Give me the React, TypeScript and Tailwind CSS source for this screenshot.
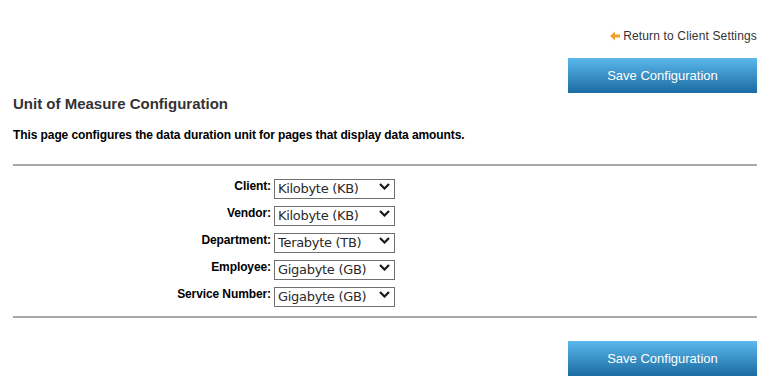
import React from "react";

const rows = [
  { label: "Client:", value: "Kilobyte (KB)" },
  { label: "Vendor:", value: "Kilobyte (KB)" },
  { label: "Department:", value: "Terabyte (TB)" },
  { label: "Employee:", value: "Gigabyte (GB)" },
  { label: "Service Number:", value: "Gigabyte (GB)" },
];

const options = ["Byte (B)", "Kilobyte (KB)", "Megabyte (MB)", "Gigabyte (GB)", "Terabyte (TB)"];

function SaveButton() {
  return (
    <button
      type="button"
      className="w-[189px] h-[35px] bg-gradient-to-b from-[#5ab8ec] to-[#1a6ca2] text-white text-[13px] font-['Liberation_Sans',Arial,sans-serif]"
    >
      Save Configuration
    </button>
  );
}

function Select({ value }: { value: string }) {
  return (
    <div className="relative w-[121px] h-[20px]">
      <select
        defaultValue={value}
        className="appearance-none w-full h-full border border-[#707070] bg-white pl-[3px] py-0 text-[13px] leading-[18px] text-[#2a2a2a] font-['DejaVu_Sans',Tahoma,sans-serif] tracking-[-0.3px] outline-none rounded-none"
      >
        {options.map((o) => (
          <option key={o}>{o}</option>
        ))}
      </select>
      <svg
        className="absolute right-[5px] top-[7px] pointer-events-none"
        width="11"
        height="7"
        viewBox="0 0 11 7"
      >
        <path d="M1 1 L5.5 5.5 L10 1" fill="none" stroke="#1a1a1a" strokeWidth="2.2" />
      </svg>
    </div>
  );
}

export default function App() {
  return (
    <div className="w-[762px] h-[391px] bg-white pl-[13px] pr-[5px] font-['Liberation_Sans',Arial,sans-serif] text-[#333]">
      <div className="flex justify-end pt-[29px]">
        <a className="flex items-center gap-[3px] text-[12px] tracking-[0.15px] text-[#333] leading-[14px]" href="#">
          <svg width="10" height="10" viewBox="0 0 10 10">
            <path d="M0 5 L5 0.5 L5 3.5 L10 3.5 L10 6.5 L5 6.5 L5 9.5 Z" fill="#f0a030" />
          </svg>
          Return to Client Settings
        </a>
      </div>
      <div className="flex justify-end mt-[15px]">
        <SaveButton />
      </div>
      <h1 className="text-[15px] font-bold text-[#333] leading-[17px] mt-[2px]">Unit of Measure Configuration</h1>
      <p className="text-[12px] font-bold text-black leading-[14px] mt-[16px] tracking-[-0.09px]">
        This page configures the data duration unit for pages that display data amounts.
      </p>
      <div className="h-[2px] bg-[#a9a9a9] mt-[22px]" />
      <div className="flex flex-col gap-[7px] pt-[10px] pb-[12px]">
        {rows.map((r) => (
          <div key={r.label} className="flex items-center gap-[3px] h-[20px]">
            <label className="w-[258px] text-right text-[12px] leading-[14px] font-bold text-black tracking-[-0.1px]">{r.label}</label>
            <Select value={r.value} />
          </div>
        ))}
      </div>
      <div className="h-[2px] bg-[#a9a9a9]" />
      <div className="flex justify-end mt-[23px]">
        <SaveButton />
      </div>
    </div>
  );
}
